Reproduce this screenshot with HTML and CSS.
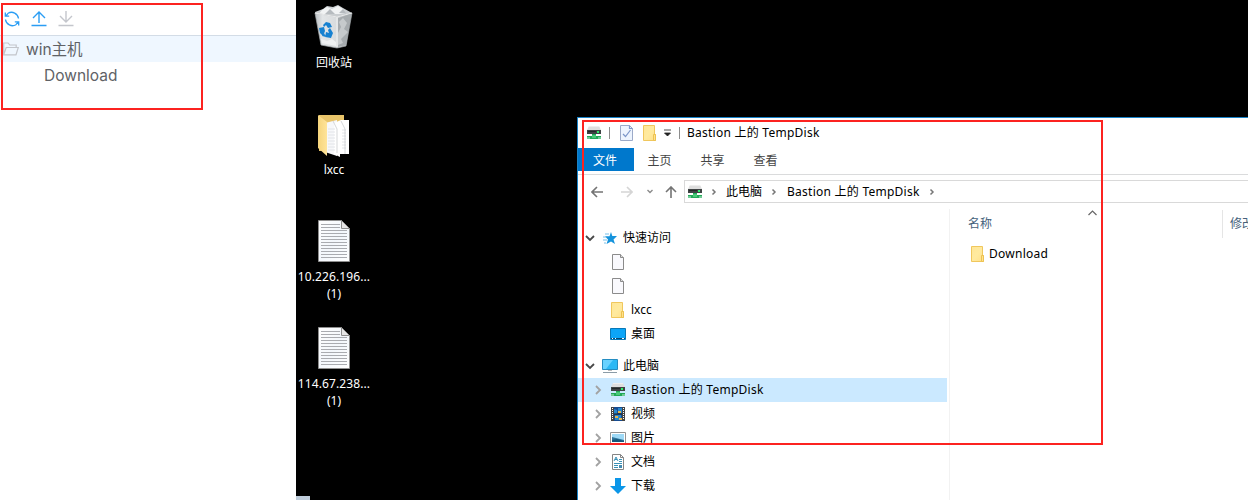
FILE: index.html
```html
<!DOCTYPE html>
<html lang="zh-CN">
<head>
<meta charset="utf-8">
<title>win主机</title>
<link rel="stylesheet" href="styles.css">
</head>
<body>
<svg class="sprite" width="0" height="0" aria-hidden="true">
  <defs>
    <linearGradient id="paper" x1="0" y1="0" x2="1" y2="1"><stop offset="0" stop-color="#fff"/><stop offset=".5" stop-color="#f3f7fc"/><stop offset="1" stop-color="#fff"/></linearGradient>
    <linearGradient id="gold" x1="0" y1="0" x2="1" y2="1"><stop offset="0" stop-color="#ffe696"/><stop offset=".5" stop-color="#ffea9f"/><stop offset="1" stop-color="#ffe08a"/></linearGradient>
    <linearGradient id="bin" x1="0" x2="1"><stop offset="0" stop-color="#b9bec2"/><stop offset=".2" stop-color="#e2e5e7"/><stop offset=".6" stop-color="#d8dbdd"/><stop offset="1" stop-color="#a0a5a8"/></linearGradient>
    <linearGradient id="fold" x1="0" x2="1"><stop offset="0" stop-color="#f5d47c"/><stop offset="1" stop-color="#ffe49a"/></linearGradient>
  </defs>
  <symbol id="drive" viewBox="0 0 16 16">
    <path d="M3 1h10l2 4H1z" fill="#dedede"/><path d="M3 1h10v1H3z" fill="#eee"/>
    <path d="M1 5h14v4H1z" fill="#3f4344"/><path d="M2 6h8v1H2z" fill="#242829"/><path d="M11 6h2v2h-2z" fill="#2ff06b"/>
    <path d="M6 9h4v2h5v3H1v-3h5z" fill="#20a957"/><path d="M6 10h4v3H6z" fill="#49c978"/><path d="M1 12h3v2H1zm11 0h3v2h-3z" fill="#6fca93"/>
  </symbol>
  <symbol id="folder" viewBox="0 0 16 16">
    <path d="M1.500.500h11v9h1v6h-12z" fill="url(#gold)" stroke="#f0c75d"/><path d="M11.500 9.500h2v6h-2z" fill="#ffe28c" stroke="#edc252"/>
  </symbol>
  <symbol id="page" viewBox="0 0 16 16">
    <path d="M2.500.500h8l3 3v12h-11z" fill="#f9f9fd" stroke="#8b8b8b"/><path d="M10.500.500v3h3" fill="#ddd" stroke="#8b8b8b"/>
  </symbol>
  <symbol id="right" viewBox="0 0 10 10"><path d="M3 1l4 4-4 4" fill="none" stroke="#a2a2a2" stroke-width="1.800"/></symbol>
  <symbol id="down" viewBox="0 0 10 10"><path d="M1 3l4 4 4-4" fill="none" stroke="#484848" stroke-width="1.800"/></symbol>
  <symbol id="crumb" viewBox="0 0 6 8"><path d="M1.500 1.500L4 4 1.500 6.500" fill="none" stroke="#777" stroke-width="1.500"/></symbol>
  <symbol id="textfile" viewBox="0 0 32 42">
    <path d="M.5.5h23l8 8v33H.5z" fill="url(#paper)" stroke="#8e8e8e"/>
    <path d="M3 4.500h19M3 7.500h19M3 10.500h26M3 13.500h26M3 16.500h26M3 19.500h26M3 22.500h26M3 25.500h26M3 28.500h26M3 31.500h26M3 34.500h26M3 37.500h26" stroke="#a9abb0"/>
    <path d="M23.500.500v8h8z" fill="#e6e6e6" stroke="#8e8e8e"/>
  </symbol>
</svg>
<main class="screen">
  <aside class="files">
    <div class="tools">
      <svg width="16" height="16" viewBox="0 0 16 16" fill="none" stroke="#2a9df4" stroke-width="1.300"><path d="M4 2.300A7 7 0 0 1 14.500 7.500M12 13.700A7 7 0 0 1 1.500 8.500M1.300 1.500v3.700h3.900M14.700 14.500v-3.700h-3.900M1.800 5.200L4 2.300M14.200 10.800L12 13.700"/></svg>
      <svg width="16" height="16" viewBox="0 0 16 16" fill="none" stroke="#2a9df4" stroke-width="1.400"><path d="M8 12V1M2 7L8 1l6 6M.5 14.500h15"/></svg>
      <svg width="16" height="16" viewBox="0 0 16 16" fill="none" stroke="#c4c6cc" stroke-width="1.400"><path d="M8 0v11M2 5l6 6 6-6M.5 14.500h15"/></svg>
    </div>
    <div class="node node-root">
      <svg width="16" height="14" viewBox="0 0 16 14" fill="none" stroke="#c3c6cc" stroke-width="1.200"><path d="M.7 12.500V1h4.500l1.500 2h6.500v2.500M.7 12.800l2.500-7.300h12.100l-2.300 7.300z"/></svg>
      <span>win主机</span>
    </div>
    <div class="node node-child"><span>Download</span></div>
  </aside>
  <section class="desktop">
    <div class="shortcuts">
      <div class="shortcut">
        <svg width="40" height="45" viewBox="0 0 40 45">
          <path d="M1 8l8-3 4-3 6 1 5-2 5 3 9 5-2 4H3z" fill="#c9cdd0"/><path d="M8 6l5-3 5 2 6-3 5 3 4 5H5z" fill="#f1f3f4"/><path d="M11 10l5-5 5 5zM25 9l4-4 4 5z" fill="#b6bbbf"/>
          <path d="M1 9l22 4 15-4-6 33-9 2-16-3z" fill="url(#bin)" stroke="#a5aaad" stroke-width=".7"/>
          <path d="M1 9l22 4 15-4M23 13v30" fill="none" stroke="#f8f8f8" stroke-width=".8"/><path d="M24 14l13-4-5 31-8 2z" fill="#a6abae"/><path d="M29 14l4 5-3 6 4 3-7 7 2 4-5 2V29l3-6-2-5z" fill="#c6cacc"/><path d="M7 35l6 2 5-2 4 3v4L8 39z" fill="#eff1f2"/>
          <g fill="#1681d1"><path d="M9 21l3-3 4 1 2 4-4 1-2-3-2 2z"/><path d="M5 24l5-1 1 4-2 5-3-3z"/><path d="M16 24l3 5-2 5-6-1 1-5 3 1-1-3zM8 32l2-3 2 4z"/></g>
        </svg>
        <span>回收站</span>
      </div>
      <div class="shortcut">
        <svg class="open-folder" width="32" height="42" viewBox="0 0 32 42">
          <path d="M1 0h25v36H1z" fill="#e8c46a"/><path d="M7 8l12-3v36L7 37z" fill="#f7f8fa"/><path d="M16 8l7-3h8v34h-9v3l-6-3z" fill="#fff"/>
          <path d="M10 14h7M10 17h7M10 20h7M10 23h7M10 26h7M10 29h7M10 32h7M10 35h7M24 15h4M24 18h4M24 21h4M24 24h4M24 27h4M24 30h4M24 33h4" stroke="#e2e4e8"/>
          <path d="M15 6l4 8v24M23 6l4 8v25" fill="none" stroke="#c3c6c9" stroke-width=".7"/><path d="M0 0l9 7v34l-9-8z" fill="url(#fold)"/>
        </svg>
        <span>lxcc</span>
      </div>
      <div class="shortcut"><svg class="text-file" width="32" height="42"><use href="#textfile"/></svg><span class="ip">10.226.196...</span><span>(1)</span></div>
      <div class="shortcut"><svg class="text-file" width="32" height="42"><use href="#textfile"/></svg><span class="ip">114.67.238...</span><span>(1)</span></div>
    </div>
    <div class="taskbar"></div>
    <div class="window">
      <header class="titlebar">
        <svg width="16" height="16"><use href="#drive"/></svg>
        <i class="rule rule-a"></i>
        <svg class="check" width="14" height="16" viewBox="0 0 14 16"><path d="M.5.500h9l3 3v12H.5z" fill="#edf4fe" stroke="#9caac8"/><path d="M9.500.500v3h3M3 9l2.500 2.500L10.500 5" fill="none" stroke="#7c96c9" stroke-width="1.200"/></svg>
        <svg class="quick-folder" width="16" height="16"><use href="#folder"/></svg>
        <svg class="more" width="7" height="8" viewBox="0 0 7 8"><path d="M0 1h7M.5 4h6L3.500 7z" fill="#222" stroke="#222" stroke-width=".8"/></svg>
        <i class="rule rule-b"></i>
        <span class="path">Bastion 上的 TempDisk</span>
      </header>
      <nav class="tabs"><span class="active">文件</span><span>主页</span><span>共享</span><span>查看</span></nav>
      <div class="location">
        <div class="arrows">
          <svg width="12" height="12" viewBox="0 0 12 12" fill="none" stroke="#747474" stroke-width="1.600"><path d="M12 6H1M6 1L1 6l5 5"/></svg>
          <svg width="12" height="12" viewBox="0 0 12 12" fill="none" stroke="#d5d5d5" stroke-width="1.600"><path d="M0 6h11M6 1l5 5-5 5"/></svg>
          <svg class="recent" width="6" height="5" viewBox="0 0 6 5" fill="none" stroke="#8b8b8b" stroke-width="1.400"><path d="M.5 1L3 3.500 5.500 1"/></svg>
          <svg class="up" width="12" height="12" viewBox="0 0 12 12" fill="none" stroke="#747474" stroke-width="1.600"><path d="M6 12V1M1 6l5-5 5 5"/></svg>
        </div>
        <div class="address">
          <svg width="16" height="16"><use href="#drive"/></svg>
          <svg class="sep first" width="6" height="8"><use href="#crumb"/></svg><span>此电脑</span>
          <svg class="sep second" width="6" height="8"><use href="#crumb"/></svg><span class="path">Bastion 上的 TempDisk</span>
          <svg class="sep" width="6" height="8"><use href="#crumb"/></svg>
        </div>
      </div>
      <div class="body">
        <div class="tree">
          <div class="item top"><svg width="10" height="10"><use href="#down"/></svg>
            <svg class="ico" width="16" height="16" viewBox="0 0 16 16"><path d="M9 2l1.300 4H15l-3.500 3.500L13 14l-4-2.500L4.500 14 6 9.500 3 6.300h4.500z" fill="#1593dc"/><path d="M3 4h4M1 7h3M1 10h4M2 13h2" stroke="#76bfea"/></svg><span>快速访问</span></div>
          <div class="item leaf"><svg class="ico" width="16" height="16"><use href="#page"/></svg></div>
          <div class="item leaf"><svg class="ico" width="16" height="16"><use href="#page"/></svg></div>
          <div class="item leaf"><svg class="ico" width="16" height="16"><use href="#folder"/></svg><span>lxcc</span></div>
          <div class="item leaf desk"><svg class="ico" width="16" height="16" viewBox="0 0 16 16"><path d="M.5 2.500h15v11H.5z" fill="#0ca5f7" stroke="#0878b7"/><path d="M1 12.500h14" stroke="#064971"/><path d="M2 12.500h1M5 12.500h1M12 12.500h2" stroke="#fff"/></svg><span>桌面</span></div>
          <div class="item top computer"><svg width="10" height="10"><use href="#down"/></svg>
            <svg class="ico" width="16" height="16" viewBox="0 0 16 16"><path d="M.5 1.500h15v10H.5z" fill="#2db9f5" stroke="#258dc2"/><path d="M1 2h10L4 11H1z" fill="#69d2ff"/><path d="M6 12h4v1H6z" fill="#bbb"/><path d="M1 14.500h14" stroke="#8b9ca7"/></svg><span>此电脑</span></div>
          <div class="item sub selected"><svg width="10" height="10"><use href="#right"/></svg><svg class="ico" width="16" height="16"><use href="#drive"/></svg><span class="path">Bastion 上的 TempDisk</span></div>
          <div class="item sub"><svg width="10" height="10"><use href="#right"/></svg>
            <svg class="ico" width="16" height="16" viewBox="0 0 16 16"><path d="M1 1h14v14H1z" fill="#444"/><path d="M4 1h8v14H4z" fill="#174c91"/><path d="M4 3l3 1v4H4zM8 2h4v5H8zM5 9h6v5H5z" fill="#2687d0"/><path d="M8 5h3v2H8zM5 10h3v2H5zM9 12h3v2H9z" fill="#e7b84b"/><path d="M4 8h8" stroke="#222"/><path d="M2.500 2v12M13.500 2v12" stroke="#fff" stroke-dasharray="1 1"/></svg><span>视频</span></div>
          <div class="item sub"><svg width="10" height="10"><use href="#right"/></svg>
            <svg class="ico" width="16" height="16" viewBox="0 0 16 16"><path d="M.5 2.500h15v11H.5z" fill="#fff" stroke="#929292"/><path d="M2 4h12v8H2z" fill="#9ed9f6"/><path d="M2 7l4 1 8 2v2H2z" fill="#30769c"/><path d="M2 10l5-1 7 2v1H2z" fill="#17577a"/></svg><span>图片</span></div>
          <div class="item sub"><svg width="10" height="10"><use href="#right"/></svg>
            <svg class="ico" width="16" height="16" viewBox="0 0 16 16"><path d="M2.500.500h8l3 3v12h-11z" fill="#fff" stroke="#858585"/><path d="M10.500.500v3h3" fill="none" stroke="#858585"/><path d="M4 7l2-4 2 4M5 5.500h2M9 5.500h3M9 7.500h3M4 9.500h8M4 11.500h4M4 13.500h4" fill="none" stroke="#3a91b7"/><path d="M9 11h3v3H9z" fill="#458bb0"/></svg><span>文档</span></div>
          <div class="item sub"><svg width="10" height="10"><use href="#right"/></svg>
            <svg class="ico" width="16" height="16" viewBox="0 0 16 16"><path d="M5 0h6v8h5l-8 8-8-8h5z" fill="#0b96e8"/></svg><span>下载</span></div>
        </div>
        <div class="list">
          <div class="columns">
            <div class="col-name"><span>名称</span><svg class="sort" width="9" height="6" viewBox="0 0 9 6" fill="none" stroke="#666" stroke-width="1.200"><path d="M.5 5l4-4 4 4"/></svg></div>
            <div class="col-date">修改</div>
          </div>
          <div class="entry"><svg width="16" height="16"><use href="#folder"/></svg><span class="path">Download</span></div>
        </div>
      </div>
    </div>
  </section>
  <div class="mark mark-files"></div>
  <div class="mark mark-window"></div>
</main>
</body>
</html>
```
FILE: styles.css
```css
* { box-sizing: border-box; }
body { margin: 0; overflow: hidden; background: #fff; }
svg { display: block; flex: none; }
.sprite { position: absolute; }
.screen { position: relative; display: flex; width: 1248px; height: 500px; overflow: hidden; font: 12px/18px "Noto Sans", "Noto Sans CJK SC", sans-serif; color: #000; white-space: nowrap; }
.files { width: 296px; font: 15.5px/26px Inter, "Noto Sans CJK SC", sans-serif; color: #606266; }
.tools { display: flex; gap: 11px; height: 36px; padding: 11px 0 0 4px; border-bottom: 1px solid #d3dce6; }
.node { display: flex; align-items: center; height: 26px; }
.node span { padding-top: 2px; }
.node-root { gap: 7px; padding-left: 3px; background: #eff7ff; }
.node-child { padding-left: 44px; }
.desktop { position: relative; flex: 1; background: #000; }
.shortcuts { display: flex; flex-direction: column; width: 76px; color: #fff; }
.shortcut { display: flex; flex-direction: column; align-items: center; height: 107px; padding-top: 4px; }
.shortcut svg { margin-bottom: 5px; }
.shortcut .open-folder { margin: 4px 0; }
.shortcut .text-file { margin: 2px 0 6px; }
.shortcut span + span { margin-top: -1px; }
.ip { letter-spacing: .1px; }
.taskbar { position: absolute; left: 0; bottom: 0; width: 14px; height: 4px; background: #bfcddb; }
.window { position: absolute; left: 281px; top: 117px; width: 700px; height: 400px; background: #fff; border: 1px solid #1883c8; }
.path { letter-spacing: .25px; }
.titlebar { display: flex; align-items: center; height: 30px; padding-left: 8px; }
.rule { width: 1px; height: 12px; background: #8d8d8d; }
.rule-a { margin: 0 11px 0 7px; }
.check { margin-left: -1px; }
.quick-folder { margin-left: 8px; }
.more { margin-left: 6px; }
.rule-b { margin: 0 7px 0 8px; }
.tabs { display: flex; height: 27px; border-bottom: 1px solid #dadbdc; color: #444; line-height: 25px; }
.tabs span { width: 53px; height: 23px; padding-right: 2px; text-align: center; }
.tabs .active { width: 56px; background: #0078cc; color: #fff; }
.location { display: flex; height: 34px; padding: 5px 0 6px; }
.arrows { display: flex; align-items: center; width: 106px; padding-left: 13px; }
.arrows svg + svg { margin-left: 18px; }
.arrows .recent + .up { margin-left: 12px; }
.arrows svg + .recent { margin-left: 14px; }
.address { display: flex; align-items: center; flex: 1; border: 1px solid #d9d9d9; padding-left: 2px; }
.sep { margin: 0 9px; }
.first { margin: 0 9px 0 8px; }
.second { margin-right: 10px; }
.body { display: flex; height: 308px; }
.tree { flex: none; width: 371px; padding-top: 17px; }
.item { display: flex; align-items: center; width: 369px; height: 24px; }
.top { padding-left: 7px; }
.top .ico { margin: 0 5px 0 7px; }
.computer { margin-top: 8px; }
.sub { padding-left: 15px; }
.sub .ico { margin: 0 5px 0 7px; }
.leaf { padding-left: 32px; }
.leaf .ico { margin-right: 5px; }
.selected { background: #cbe9ff; }
.list { flex: 1; min-width: 0; border-left: 1px solid #f2f2f2; }
.columns { display: flex; height: 28px; margin-top: 1px; color: #44617b; line-height: 28px; }
.col-name { position: relative; flex: none; width: 273px; padding-left: 18px; border-right: 1px solid #e5e5e5; }
.sort { position: absolute; left: 138px; top: 0; }
.col-date { padding-left: 7px; }
.entry { display: flex; align-items: center; gap: 3px; height: 32px; padding-left: 20px; }
.mark { position: absolute; border: 2px solid #fc2320; }
.mark-files { left: 1px; top: 3px; width: 202px; height: 107px; }
.mark-window { left: 582px; top: 120px; width: 521px; height: 325px; }
```
